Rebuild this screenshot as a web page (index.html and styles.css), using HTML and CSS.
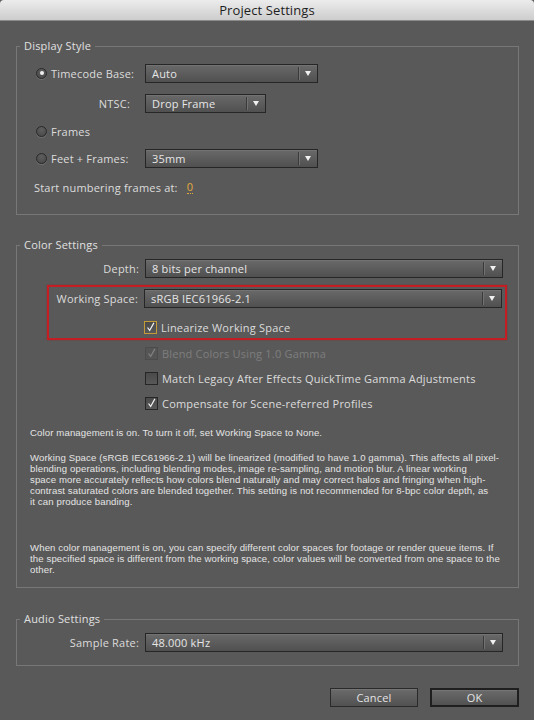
FILE: index.html
```html
<!DOCTYPE html>
<html lang="en">
<head>
<meta charset="utf-8">
<title>Project Settings</title>
<link rel="stylesheet" href="styles.css">
</head>
<body>
<div class="titlebar">Project Settings</div>
<div class="main">
  <fieldset class="group display">
    <legend>Display Style</legend>
    <div class="row h30 first">
      <span class="radio on"></span><span class="rlab">Timecode Base:</span>
      <div class="select w173"><span class="val">Auto</span><span class="btn"></span></div>
    </div>
    <div class="row h30">
      <span class="lab ntsc">NTSC:</span>
      <div class="select w121"><span class="val">Drop Frame</span><span class="btn"></span></div>
    </div>
    <div class="row h26">
      <span class="radio"></span><span class="rlab">Frames</span>
    </div>
    <div class="row h28">
      <span class="radio"></span><span class="rlab">Feet + Frames:</span>
      <div class="select w173"><span class="val">35mm</span><span class="btn"></span></div>
    </div>
    <div class="row h30 start">
      <span>Start numbering frames at:</span><span class="num">0</span>
    </div>
  </fieldset>

  <fieldset class="group color">
    <legend>Color Settings</legend>
    <div class="row h24 first">
      <span class="lab wide">Depth:</span>
      <div class="select wfull"><span class="val">8 bits per channel</span><span class="btn"></span></div>
    </div>
    <div class="highlight">
      <div class="row h22">
        <span class="lab inner">Working Space:</span>
        <div class="select wfull"><span class="val">sRGB IEC61966-2.1</span><span class="btn"></span></div>
      </div>
      <div class="row h22 check-row lin">
        <span class="check focus"><svg viewBox="0 0 13 13"><path d="M3 6.5 L5.5 10 L10.5 1" /></svg></span>
        <span>Linearize Working Space</span>
      </div>
    </div>
    <div class="row h26 check-row outer disabled">
      <span class="check"><svg viewBox="0 0 13 13"><path d="M3 6.5 L5.5 10 L10.5 1" /></svg></span>
      <span>Blend Colors Using 1.0 Gamma</span>
    </div>
    <div class="row h25 check-row outer">
      <span class="check"></span>
      <span>Match Legacy After Effects QuickTime Gamma Adjustments</span>
    </div>
    <div class="row h24 check-row outer">
      <span class="check"><svg viewBox="0 0 13 13"><path d="M3 6.5 L5.5 10 L10.5 1" /></svg></span>
      <span>Compensate for Scene-referred Profiles</span>
    </div>
    <p class="note n1">Color management is on. To turn it off, set Working Space to None.</p>
    <p class="note n2">Working Space (sRGB IEC61966-2.1) will be linearized (modified to have 1.0 gamma). This affects all pixel-<br>blending operations, including blending modes, image re-sampling, and motion blur. A linear working<br>space more accurately reflects how colors blend naturally and may correct halos and fringing when high-<br>contrast saturated colors are blended together. This setting is not recommended for 8-bpc color depth, as<br>it can produce banding.</p>
    <p class="note n3">When color management is on, you can specify different color spaces for footage or render queue items. If<br>the specified space is different from the working space, color values will be converted from one space to the<br>other.</p>
  </fieldset>

  <fieldset class="group audio">
    <legend>Audio Settings</legend>
    <div class="row h24 first">
      <span class="lab wide">Sample Rate:</span>
      <div class="select wfull"><span class="val">48.000 kHz</span><span class="btn"></span></div>
    </div>
  </fieldset>

  <div class="buttons">
    <button class="btn-cancel">Cancel</button>
    <button class="btn-ok">OK</button>
  </div>
</div>
</body>
</html>
```
FILE: styles.css
```css
* { box-sizing: border-box; }
html, body { margin: 0; padding: 0; }
body {
  width: 534px;
  height: 720px;
  overflow: hidden;
  background: #595959;
  font-family: "Open Sans", "Noto Sans", "DejaVu Sans", sans-serif;
  font-size: 11px;
  letter-spacing: 0.2px;
  color: #dcdcdc;
}
.titlebar {
  height: 21px;
  background: linear-gradient(#ececec, #cdcdcd);
  border-bottom: 1px solid #8a8a8a;
  border-radius: 4px 4px 0 0;
  color: #1e1e1e;
  font-size: 13px;
  letter-spacing: 0.1px;
  line-height: 20px;
  text-align: center;
}
.main { padding: 0 15px 0 16px; }

.group {
  margin: 0;
  padding: 0;
  min-width: 0;
  border: 1px solid #777777;
}
.group legend {
  margin-left: 3px;
  padding: 0 4px;
  height: 14px;
  line-height: 14px;
  font-size: 11px;
  color: #e0e0e0;
}
.display { margin-top: 18px; padding-bottom: 12px; }
.color { margin-top: 23px; padding-bottom: 12px; }
.audio { margin-top: 24px; padding-bottom: 11px; }

.row { display: flex; align-items: center; white-space: nowrap; }
.row.first { margin-top: 4px; }
.display .row.first { margin-top: 5px; }
.h22 { height: 22px; }
.h24 { height: 24px; }
.h25 { height: 25px; }
.h26 { height: 26px; }
.h28 { height: 28px; }
.h30 { height: 30px; }

.radio {
  width: 11px;
  height: 11px;
  margin-left: 19px;
  margin-right: 4px;
  border-radius: 50%;
  border: 1px solid #2a2a2a;
  background: radial-gradient(circle at 50% 30%, #5e5e5e, #464646);
  box-shadow: 0 1px 0 rgba(255,255,255,0.12);
  display: flex;
  align-items: center;
  justify-content: center;
  flex: none;
}
.radio.on::after {
  content: "";
  width: 4px;
  height: 4px;
  border-radius: 50%;
  background: #f0f0f0;
}
.rlab { width: 94px; }
.lab { text-align: right; flex: none; }
.lab.ntsc { width: 113px; margin-right: 15px; }
.lab.wide { width: 122px; margin-right: 6px; }
.lab.inner { width: 89px; margin-right: 6px; }

.select {
  display: flex;
  align-items: stretch;
  height: 19px;
  border: 1px solid #262626;
  background: linear-gradient(#696969, #505050);
  box-shadow: inset 0 1px 0 rgba(255,255,255,0.07);
  flex: none;
}
.w173 { width: 173px; }
.w121 { width: 121px; }
.wfull { width: 358px; }
.select .val {
  flex: 1;
  padding-left: 6px;
  line-height: 17px;
  color: #e6e6e6;
}
.select .btn {
  position: relative;
  width: 19px;
  display: flex;
  align-items: center;
  justify-content: center;
}
.select .btn::before {
  content: "";
  position: absolute;
  left: 0;
  top: 2px;
  bottom: 2px;
  width: 1px;
  background: #3a3a3a;
  box-shadow: 1px 0 0 #727272;
}
.select .btn::after {
  content: "";
  width: 0;
  height: 0;
  margin-left: 1px;
  border-left: 3.5px solid transparent;
  border-right: 3.5px solid transparent;
  border-top: 5px solid #f0f0f0;
}

.start { padding-left: 17px; }
.num {
  margin-left: 9px;
  color: #e3a93c;
  border-bottom: 1px dotted #e3a93c;
  line-height: 12px;
}

.highlight {
  margin: 5px 11px 0 30px;
  border: 2px solid #c41d23;
  box-shadow: 0 0 1px #a01218;
}
.lin { margin-top: 7px; padding-left: 95px; }
.check-row.outer { padding-left: 128px; }
.check {
  width: 13px;
  height: 13px;
  margin-right: 4px;
  border: 1px solid #262626;
  background: linear-gradient(#4a4a4a, #585858);
  flex: none;
  display: flex;
}
.check svg { width: 100%; height: 100%; overflow: visible; }
.check path {
  fill: none;
  stroke: #f2f2f2;
  stroke-width: 1.4;
}
.check.focus { border-color: #c59b3a; }
.disabled { color: #7e7e7e; }
.disabled .check { border-color: #4c4c4c; background: #555555; }
.disabled .check path { stroke: #838383; }

.note {
  margin: 0;
  padding-left: 13px;
  font-family: "Liberation Sans", Arial, sans-serif;
  font-size: 9.6px;
  letter-spacing: 0.12px;
  line-height: 11px;
  white-space: nowrap;
  color: #e4e4e4;
}
.n1 { margin-top: 12px; }
.n2 { margin-top: 14px; }
.n3 { margin-top: 35px; }

.buttons {
  display: flex;
  justify-content: flex-end;
  gap: 12px;
  margin-top: 22px;
}
.buttons button {
  height: 19px;
  padding: 0;
  font-family: inherit;
  font-size: 11px;
  letter-spacing: 0.2px;
  color: #e4e4e4;
  background: linear-gradient(#6b6b6b, #515151);
  border: 1px solid #2a2a2a;
  box-shadow: inset 0 1px 0 rgba(255,255,255,0.08);
}
.btn-cancel { width: 88px; }
.btn-ok { width: 89px; border: 2px solid #1f1f1f !important; }
```
